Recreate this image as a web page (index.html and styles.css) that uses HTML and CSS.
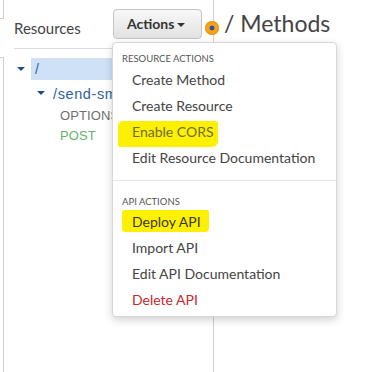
FILE: index.html
```html
<!DOCTYPE html>
<html>
<head>
<meta charset="utf-8">
<link rel="stylesheet" href="styles.css">
</head>
<body>
<div class="page">
  <div class="edge">
    <div class="edge-top"></div>
    <div class="edge-bottom"></div>
  </div>
  <div class="left">
    <div class="left-head">
      <span class="res-title">Resources</span>
      <button class="actions-btn">Actions<span class="caret"></span></button>
    </div>
    <div class="tree">
      <div class="node node-root">
        <span class="tri"></span>
        <span class="node-label selected">/</span>
      </div>
      <div class="node node-child">
        <span class="tri"></span>
        <span class="node-label">/send-sms</span>
      </div>
      <div class="method method-options">OPTIONS</div>
      <div class="method method-post">POST</div>
    </div>
  </div>
  <div class="right">
    <span class="dot"></span>
    <h1 class="title">/ Methods</h1>
  </div>

  <div class="menu">
    <div class="menu-head">RESOURCE ACTIONS</div>
    <div class="menu-item">Create Method</div>
    <div class="menu-item">Create Resource</div>
    <div class="menu-item"><span class="hl hl-cors">Enable CORS</span></div>
    <div class="menu-item">Edit Resource Documentation</div>
    <div class="menu-divider"></div>
    <div class="menu-head menu-head-api">API ACTIONS</div>
    <div class="menu-item"><span class="hl hl-deploy">Deploy API</span></div>
    <div class="menu-item">Import API</div>
    <div class="menu-item">Edit API Documentation</div>
    <div class="menu-item danger">Delete API</div>
  </div>
</div>
</body>
</html>
```

FILE: styles.css
```css
* { box-sizing: border-box; }
html, body { margin: 0; padding: 0; background: #fff; }
body { font-family: Lato, "Open Sans", sans-serif; color: #444; }

.page {
  position: relative;
  width: 377px;
  height: 372px;
  display: flex;
  overflow: hidden;
}

/* cut-off neighbour panel edges */
.edge {
  width: 4px;
  display: flex;
  flex-direction: column;
}
.edge-top {
  height: 19px;
  border-right: 1px solid #cfcfcf;
  border-bottom: 1px solid #cfcfcf;
}
.edge-bottom {
  margin-top: 38px;
  flex: 1;
  border-right: 1px solid #cfcfcf;
  border-top: 1px solid #cfcfcf;
}

/* resources column */
.left {
  width: 210px;
  border-right: 1px solid #cfcfcf;
  display: flex;
  flex-direction: column;
}
.left-head {
  margin-left: 10px;
  height: 49px;
  border-bottom: 1px solid #dcdcdc;
  display: flex;
  align-items: flex-start;
}
.res-title {
  font-size: 15px;
  line-height: 18px;
  margin-top: 19px;
  width: 99px;
  color: #444;
}
.actions-btn {
  margin-top: 9px;
  width: 89px;
  height: 30px;
  padding: 0 0 0 13px;
  text-align: left;
  border: 1px solid #c4c4c4;
  border-radius: 4px;
  background: linear-gradient(#f8f8f8, #e2e2e2);
  font-family: Lato, sans-serif;
  font-weight: 700;
  font-size: 14px;
  line-height: 28px;
  color: #333;
  display: flex;
  align-items: center;
}
.caret {
  width: 0;
  height: 0;
  margin-left: 3px;
  margin-top: 1px;
  border-left: 4px solid transparent;
  border-right: 4px solid transparent;
  border-top: 4px solid #333;
}

.tree {
  padding-top: 9px;
  font-family: "Liberation Sans", Arial, sans-serif;
}
.node {
  display: flex;
  align-items: center;
}
.tri {
  width: 0;
  height: 0;
  border-left: 4px solid transparent;
  border-right: 4px solid transparent;
  border-top: 4px solid #1f4d8c;
}
.node-root { height: 22px; }
.node-root .tri { margin-left: 13px; }
.node-label {
  font-size: 14px;
  color: #2f5f9f;
  white-space: nowrap;
}
.node-root .node-label {
  margin-left: 6px;
  flex: 1;
  height: 22px;
  line-height: 22px;
  padding-left: 4px;
  background: #cee1f6;
}
.node-child {
  height: 24px;
  margin-top: 2px;
}
.node-child .tri { margin-left: 33px; margin-bottom: 2px; }
.node-child .node-label {
  margin-left: 8px;
  line-height: 24px;
  font-size: 14.5px;
  letter-spacing: 0.6px;
}
.method {
  padding-left: 56px;
  font-size: 13px;
  line-height: 20px;
  letter-spacing: 0.1px;
  white-space: nowrap;
}
.method-options { color: #6f6f6f; }
.method-post { color: #67b36b; }

/* methods column */
.right {
  position: relative;
  flex: 1;
  padding: 9px 0 0 10px;
}
.title {
  margin: 0;
  font-size: 23px;
  font-weight: 400;
  line-height: 28px;
  color: #444;
}
.dot {
  position: absolute;
  left: -9px;
  top: 21px;
  width: 14px;
  height: 14px;
  border-radius: 50%;
  background: radial-gradient(circle, #2b5797 0 2.1px, #f7a21d 2.8px);
  box-shadow: inset 0 0 0 1.5px #f39a12;
}

/* dropdown menu */
.menu {
  position: absolute;
  left: 112px;
  top: 42px;
  width: 225px;
  height: 275px;
  background: #fff;
  border: 1px solid #d8d8d8;
  border-radius: 4px;
  box-shadow: 0 3px 8px rgba(0, 0, 0, 0.18);
  padding: 10px 0 3px;
}
.menu-head {
  padding-left: 9px;
  font-size: 9.5px;
  line-height: 12px;
  color: #555;
  margin-bottom: 2px;
}
.menu-head-api { margin-bottom: 1px; }
.menu-item {
  padding-left: 19px;
  font-size: 14px;
  line-height: 26px;
  height: 26px;
  color: #444;
  white-space: nowrap;
}
.menu-item.danger { color: #c8282c; }
.menu-divider {
  height: 1px;
  background: #e6e6e6;
  margin: 9px 0 15px;
}
.hl {
  position: relative;
  display: inline-block;
  z-index: 0;
}
.hl::before {
  content: "";
  position: absolute;
  z-index: -1;
  background: #fdf000;
}
.hl-cors { color: #6f6c2c; }
.hl-cors::before {
  left: -14px;
  right: -4px;
  top: 2px;
  bottom: -2px;
  border-radius: 5px 3px 6px 2px;
}
.hl-deploy { color: #3a3812; }
.hl-deploy::before {
  left: -10px;
  right: -8px;
  top: 1px;
  bottom: 3px;
  border-radius: 3px 2px 4px 3px;
}
```
